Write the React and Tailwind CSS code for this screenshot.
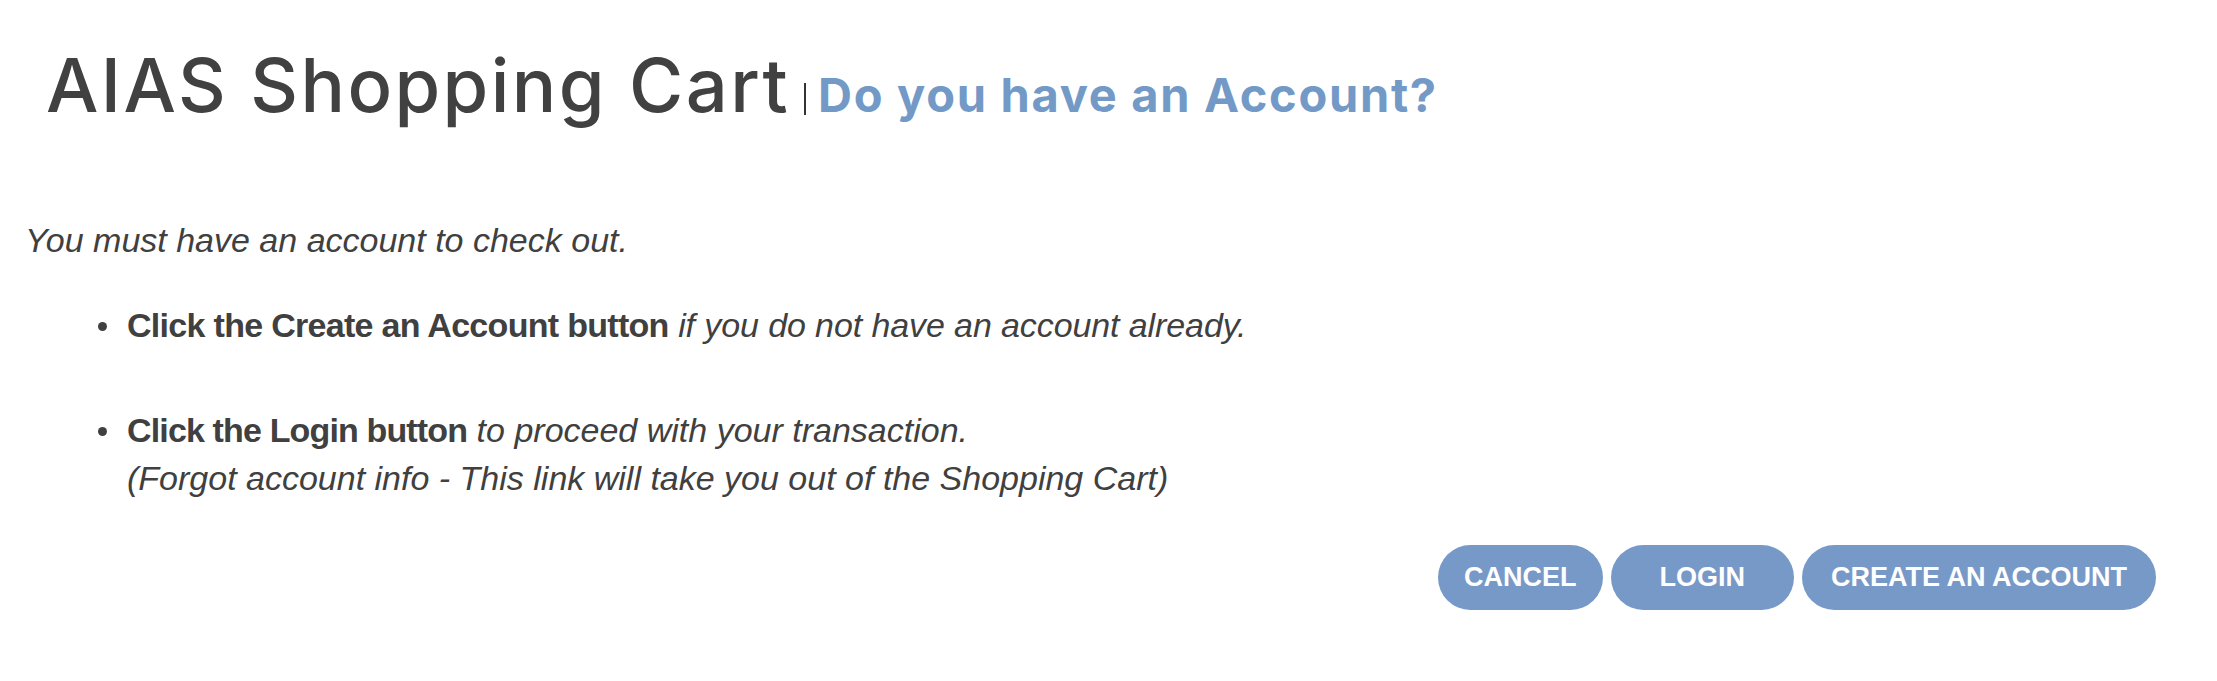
export default function App() {
  const body = { fontFamily: '"Liberation Sans", Arial, sans-serif' };
  const head = { fontFamily: 'Inter, "Noto Sans", sans-serif' };
  return (
    <div className="min-h-[681px] w-full bg-white px-[25px] text-[#404040]" style={body}>
      <header className="flex items-baseline pl-[21px] pt-[40px]">
        <h1 className="text-[74px] font-medium leading-[90px] tracking-[2.4px] text-[#414141]" style={head}>
          AIAS Shopping Cart
        </h1>
        <span aria-hidden="true" className="ml-[14px] mr-[12px] inline-block h-[32px] w-[2px] translate-y-[3px] bg-[#333333]"></span>
        <h2 className="text-[47px] font-bold leading-[60px] tracking-[1.7px] text-[#7399c6]" style={head}>
          Do you have an Account?
        </h2>
      </header>

      <p className="mt-[86px] text-[34px] italic leading-[48px]">You must have an account to check out.</p>

      <ul className="mt-[37px] pl-[73px] text-[34px] leading-[48px]">
        <li className="flex">
          <span className="mt-[21px] mr-[20px] h-[9px] w-[9px] shrink-0 rounded-full bg-[#404040]"></span>
          <span>
            <strong className="font-bold tracking-[-0.7px]">Click the Create an Account button</strong>{' '}
            <em className="italic tracking-[-0.1px]">if you do not have an account already.</em>
          </span>
        </li>
        <li className="mt-[57px] flex">
          <span className="mt-[21px] mr-[20px] h-[9px] w-[9px] shrink-0 rounded-full bg-[#404040]"></span>
          <span>
            <strong className="font-bold tracking-[-0.85px]">Click the Login button</strong>{' '}
            <em className="italic">to proceed with your transaction.</em>
            <br />
            <em className="italic">(Forgot account info - This link will take you out of the Shopping Cart)</em>
          </span>
        </li>
      </ul>

      <div className="mt-[43px] flex justify-end gap-[8px] pr-[36px]">
        <button className="h-[65px] rounded-full bg-[#7799c8] px-[26px] text-[27px] font-bold uppercase text-white">
          Cancel
        </button>
        <button className="h-[65px] rounded-full bg-[#7799c8] px-[49px] text-[27px] font-bold uppercase text-white">
          Login
        </button>
        <button className="h-[65px] rounded-full bg-[#7799c8] px-[29px] text-[27px] font-bold uppercase text-white">
          Create an Account
        </button>
      </div>
    </div>
  );
}
